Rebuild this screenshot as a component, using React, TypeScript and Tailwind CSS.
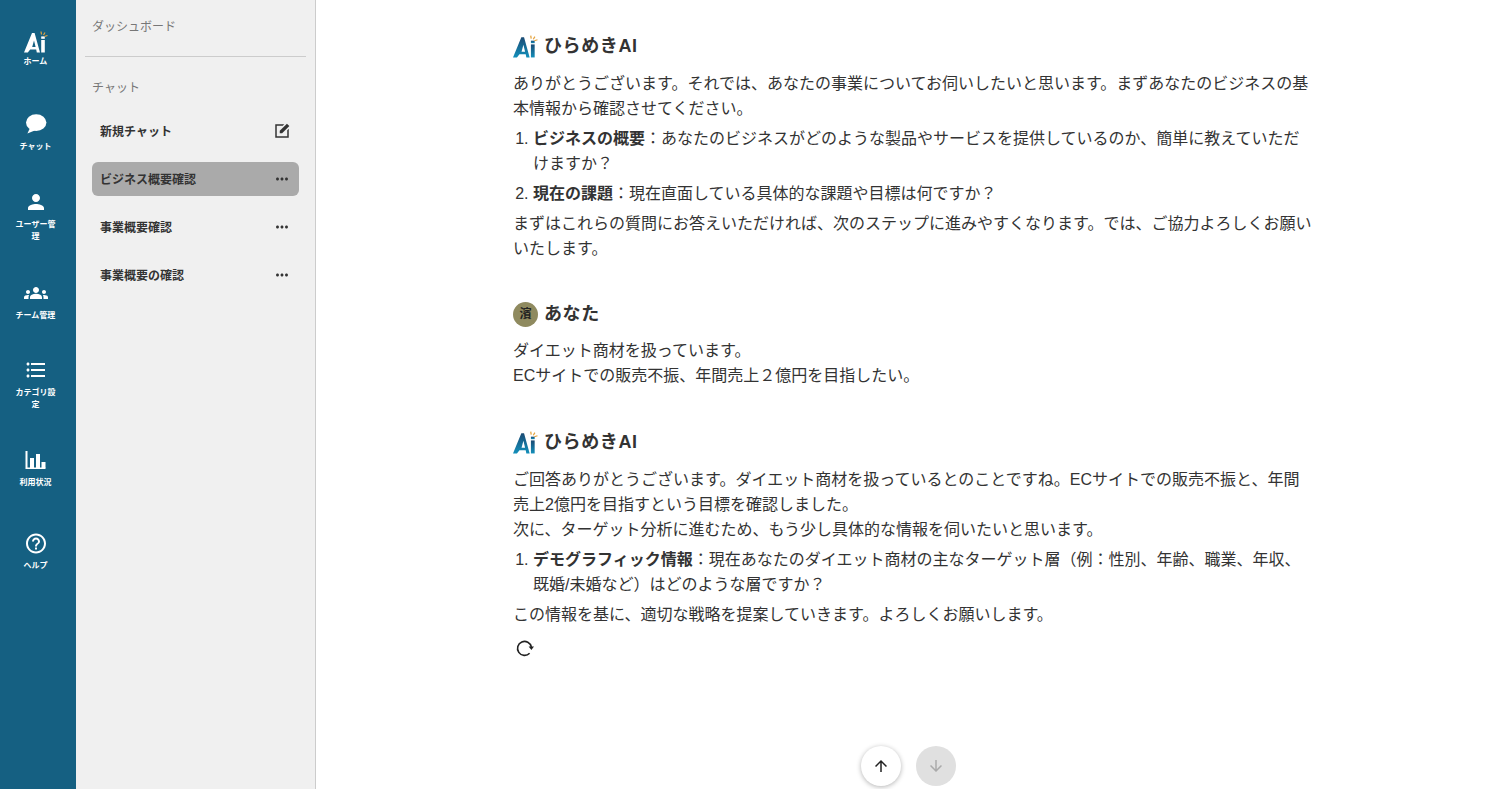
import { MdPerson, MdGroups, MdFormatListBulleted, MdHelpOutline, MdMoreHoriz, MdArrowUpward, MdArrowDownward } from 'react-icons/md';

const FONT = "font-['Liberation_Sans','Noto_Sans_CJK_JP',sans-serif]";

function AiLogo({ size, dark }: { size: number; dark?: boolean }) {
    const a = dark ? 'url(#logoGrad)' : '#ffffff';
    return (
        <svg width={size} height={size} viewBox="0 0 24 24">
            <defs>
                <linearGradient id="logoGrad" x1="0" y1="0" x2="0" y2="1">
                    <stop offset="0" stopColor="#1a4a73" />
                    <stop offset="1" stopColor="#1390bb" />
                </linearGradient>
            </defs>
            <path fill={a} fillRule="evenodd" d="M0 22.5 L8 3 L10.6 3 L16 22.5 L12.8 22.5 L12.2 19.4 L6.2 19.4 L3.8 22.5 Z M8.2 17 L11.6 17 L10 10.4 Z" />
            <rect x="17.2" y="10" width="3.6" height="12.5" fill={a} />
            <rect x="17.2" y="6.4" width="3.6" height="2.4" fill={a} />
            <path stroke="#e5a33d" strokeWidth="1.2" fill="none" d="M17.5 4.5 L17 1.5 M19.5 5 L21 2.5 M20.5 6.5 L23.5 5.5" />
        </svg>
    );
}

function ChatIcon() {
    return (
        <svg width="24" height="24" viewBox="0 0 24 24" fill="#fff">
            <ellipse cx="12.2" cy="10.6" rx="10.2" ry="8.4" />
            <path d="M6 16 L3.4 21.6 L12 18 Z" />
        </svg>
    );
}

function ChartIcon() {
    return (
        <svg width="24" height="24" viewBox="0 0 24 24" fill="#fff">
            <path d="M1.5 3h2v16.4h18V21h-20z" />
            <rect x="6" y="10" width="4" height="10" />
            <rect x="12" y="6" width="4" height="14" />
            <rect x="17.5" y="14" width="4" height="6" />
        </svg>
    );
}

function EditIcon() {
    return (
        <svg width="18" height="18" viewBox="0 0 24 24" fill="#333">
            <path d="M5 3h10l-2 2H5v14h14v-8l2-2v12H3V3z" />
            <path d="M9 15v-3.2L18.6 2.2l3.2 3.2L12.2 15z" />
        </svg>
    );
}

function ReloadIcon() {
    return (
        <svg width="20" height="20" viewBox="0 0 20 20" fill="none">
            <path d="M16.4 9 A7 7 0 1 0 14.6 15.2" stroke="#222" strokeWidth="1.6" />
            <path d="M13.6 8.4 L19 8.4 L16.4 12 Z" fill="#222" />
        </svg>
    );
}

function NavItem({ icon, label, className }: { icon: React.ReactNode; label: string; className?: string }) {
    return (
        <div className={`flex flex-col items-center w-[47px] text-white ${className ?? ''}`}>
            <div className="w-6 h-6 flex items-center justify-center">{icon}</div>
            <div className="mt-[5px] text-[8px] leading-[12px] font-bold text-center">{label}</div>
        </div>
    );
}

function ChatRow({ label, active, icon }: { label: string; active?: boolean; icon?: React.ReactNode }) {
    return (
        <div className={`h-[34px] mb-[14px] rounded-md flex items-center justify-between pl-2 pr-[7px] ${active ? 'bg-[#aaaaaa]' : ''}`}>
            <span className="pt-[2px] text-xs font-bold text-[#333]">{label}</span>
            <span className="w-5 h-5 flex items-center justify-center text-[#333]">
                {icon ?? <MdMoreHoriz size={18} />}
            </span>
        </div>
    );
}

function Heading({ avatar, name, tight }: { avatar: React.ReactNode; name: string; tight?: boolean }) {
    return (
        <div className={`flex items-center gap-[6px] h-[26px] ${tight ? 'mb-[11px]' : 'mb-[12px]'}`}>
            {avatar}
            <span className="text-lg font-bold tracking-[0.6px] text-[#333]">{name}</span>
        </div>
    );
}

export default function App() {
    return (
        <div className={`flex h-screen overflow-hidden bg-white ${FONT}`}>
            {/* Icon rail */}
            <div className="w-[76px] shrink-0 bg-[#156082] flex flex-col items-center pt-[30px] pr-[5px]">
                <div className="flex flex-col items-center text-white">
                    <AiLogo size={24} />
                    <div className="mt-[2px] text-[8px] leading-[12px] font-bold">ホーム</div>
                </div>
                <NavItem className="mt-[44px]" icon={<ChatIcon />} label="チャット" />
                <NavItem className="mt-[37px]" icon={<MdPerson size={26} />} label="ユーザー管理" />
                <NavItem className="mt-[38px]" icon={<MdGroups size={28} />} label="チーム管理" />
                <NavItem className="mt-[36px]" icon={<MdFormatListBulleted size={26} />} label="カテゴリ設定" />
                <NavItem className="mt-[37px]" icon={<ChartIcon />} label="利用状況" />
                <NavItem className="mt-[42px]" icon={<MdHelpOutline size={25} />} label="ヘルプ" />
            </div>

            {/* Sidebar */}
            <div className="w-[240px] shrink-0 bg-[#f0f0f0] border-r border-[#cccccc] px-[9px]">
                <div className="box-content h-[38px] pt-[18px] pl-[7px] border-b border-[#cccccc] text-xs leading-[18px] text-[#777]">ダッシュボード</div>
                <div className="pl-[7px] mt-[22px] text-xs leading-[18px] text-[#777]">チャット</div>
                <div className="mt-[17px] mx-[7px]">
                    <ChatRow label="新規チャット" icon={<EditIcon />} />
                    <ChatRow label="ビジネス概要確認" active />
                    <ChatRow label="事業概要確認" />
                    <ChatRow label="事業概要の確認" />
                </div>
            </div>

            {/* Messages */}
            <div className="relative flex-1 min-w-0">
                <div className="w-[806px] mx-auto pt-[33px] pl-[7px] text-base leading-[25px] text-[#333]">
                    <Heading avatar={<AiLogo size={25} dark />} name="ひらめきAI" />
                    <p className="mb-[5px]">ありがとうございます。それでは、あなたの事業についてお伺いしたいと思います。まずあなたのビジネスの基本情報から確認させてください。</p>
                    <ol className="list-decimal pl-5">
                        <li className="mb-[5px]"><b>ビジネスの概要</b>：あなたのビジネスがどのような製品やサービスを提供しているのか、簡単に教えていただけますか？</li>
                        <li className="mb-[5px]"><b>現在の課題</b>：現在直面している具体的な課題や目標は何ですか？</li>
                    </ol>
                    <p>まずはこれらの質問にお答えいただければ、次のステップに進みやすくなります。では、ご協力よろしくお願いいたします。</p>

                    <div className="mt-[40px]">
                        <Heading
                            tight
                            avatar={<div className="w-[25px] h-[25px] rounded-full bg-[#8f8a5f] flex items-center justify-center text-xs font-bold text-[#222]">濱</div>}
                            name="あなた"
                        />
                        <p>ダイエット商材を扱っています。<br />ECサイトでの販売不振、年間売上２億円を目指したい。</p>
                    </div>

                    <div className="mt-[41px]">
                        <Heading avatar={<AiLogo size={25} dark />} name="ひらめきAI" />
                        <p className="mb-[5px]">ご回答ありがとうございます。ダイエット商材を扱っているとのことですね。ECサイトでの販売不振と、年間売上2億円を目指すという目標を確認しました。<br />次に、ターゲット分析に進むため、もう少し具体的な情報を伺いたいと思います。</p>
                        <ol className="list-decimal pl-5">
                            <li className="mb-[5px]"><b>デモグラフィック情報</b>：現在あなたのダイエット商材の主なターゲット層（例：性別、年齢、職業、年収、既婚/未婚など）はどのような層ですか？</li>
                        </ol>
                        <p>この情報を基に、適切な戦略を提案していきます。よろしくお願いします。</p>
                        <div className="mt-[11px] pl-[2px]"><ReloadIcon /></div>
                    </div>
                </div>

                {/* Scroll buttons */}
                <div className="absolute bottom-[3px] left-[545px] flex gap-[15px]">
                    <button className="w-10 h-10 rounded-full bg-white shadow-[0_1px_5px_rgba(0,0,0,0.3)] flex items-center justify-center text-[#222]"><MdArrowUpward size={18} /></button>
                    <button className="w-10 h-10 rounded-full bg-[#e0e0e0] flex items-center justify-center text-[#aaa]"><MdArrowDownward size={18} /></button>
                </div>
            </div>
        </div>
    );
}
